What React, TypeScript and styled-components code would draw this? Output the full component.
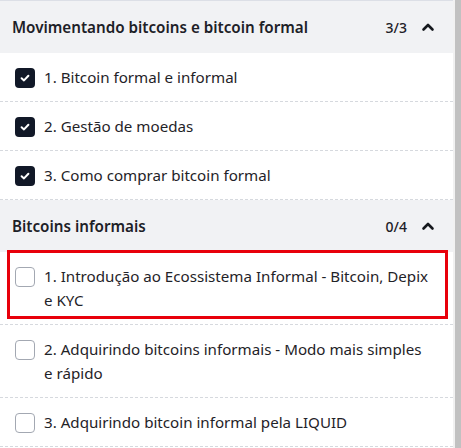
import React from 'react'
import styled, { createGlobalStyle } from 'styled-components'

const GlobalStyle = createGlobalStyle`
  html, body {
    margin: 0;
    padding: 0;
    background: #fff;
  }
  body {
    font-family: 'Noto Sans', 'Open Sans', Arial, sans-serif;
    color: #1f2328;
  }
`

const Frame = styled.div`
  display: flex;
  width: 461px;
  height: 448px;
  overflow: hidden;
`

const Panel = styled.div`
  flex: 1;
  min-width: 0;
  border-top: 1px solid #dcdfe6;
`

const SectionHeader = styled.div`
  display: flex;
  align-items: center;
  height: 52px;
  padding: 0 18px 0 12px;
  background: #f1f2f4;
`

const SectionTitle = styled.div`
  flex: 1;
  font-size: 15.2px;
  font-weight: 600;
  color: #1d2127;
`

const Count = styled.span`
  font-size: 14px;
  font-weight: 500;
  color: #1d2127;
  margin-right: 14px;
`

const List = styled.div`
  display: flex;
  flex-direction: column;
`

const Item = styled.div`
  position: relative;
  display: flex;
  align-items: flex-start;
  gap: 9px;
  padding: 12px 23px 12px 15px;
  border-bottom: 1px dashed #d6d9de;
`

const Label = styled.span`
  font-size: 15.15px;
  line-height: 24px;
  color: #1f2328;
`

const Box = styled.span<{ $checked: boolean }>`
  flex: none;
  width: 20px;
  height: 20px;
  margin-top: 3px;
  box-sizing: border-box;
  border-radius: 4px;
  display: flex;
  align-items: center;
  justify-content: center;
  background: ${(p) => (p.$checked ? '#111827' : '#fff')};
  border: ${(p) => (p.$checked ? 'none' : '1px solid #a3a8b2')};
`

const Highlight = styled.div`
  position: absolute;
  left: 7px;
  top: -2px;
  width: 441px;
  height: 69px;
  box-sizing: border-box;
  border: 3px solid #e8000b;
  pointer-events: none;
`

const Scrollbar = styled.div`
  flex: none;
  width: 8px;
  display: flex;
  background: #f1f1f1;
`

const Thumb = styled.div`
  flex: 1;
  margin-left: 2px;
  background: #c1c1c1;
`

const Check = () => (
  <svg width="12" height="12" viewBox="0 0 12 12" fill="none">
    <path d="M2.6 6.2 L5 8.4 L9.4 3.8" stroke="#fff" strokeWidth="2" strokeLinecap="round" strokeLinejoin="round" />
  </svg>
)

const Chevron = () => (
  <svg width="14" height="10" viewBox="0 0 14 10" fill="none">
    <path d="M2.5 7.5 L7 3 L11.5 7.5" stroke="#15181d" strokeWidth="2.6" strokeLinecap="round" strokeLinejoin="round" />
  </svg>
)

type Lesson = { title: string; done: boolean; active?: boolean }
type Section = { title: string; total: number; lessons: Lesson[] }

const sections: Section[] = [
  {
    title: 'Movimentando bitcoins e bitcoin formal',
    total: 3,
    lessons: [
      { title: '1. Bitcoin formal e informal', done: true },
      { title: '2. Gestão de moedas', done: true },
      { title: '3. Como comprar bitcoin formal', done: true },
    ],
  },
  {
    title: 'Bitcoins informais',
    total: 4,
    lessons: [
      { title: '1. Introdução ao Ecossistema Informal - Bitcoin, Depix e KYC', done: false, active: true },
      { title: '2. Adquirindo bitcoins informais - Modo mais simples e rápido', done: false },
      { title: '3. Adquirindo bitcoin informal pela LIQUID', done: false },
    ],
  },
]

export default function App() {
  return (
    <>
      <GlobalStyle />
      <Frame>
        <Panel>
          {sections.map((s) => {
            const done = s.lessons.filter((l) => l.done).length
            return (
              <div key={s.title}>
                <SectionHeader>
                  <SectionTitle>{s.title}</SectionTitle>
                  <Count>{done}/{s.total}</Count>
                  <Chevron />
                </SectionHeader>
                <List>
                  {s.lessons.map((l) => (
                    <Item key={l.title}>
                      <Box $checked={l.done}>{l.done && <Check />}</Box>
                      <Label>{l.title}</Label>
                      {l.active && <Highlight />}
                    </Item>
                  ))}
                </List>
              </div>
            )
          })}
        </Panel>
        <Scrollbar>
          <Thumb />
        </Scrollbar>
      </Frame>
    </>
  )
}
